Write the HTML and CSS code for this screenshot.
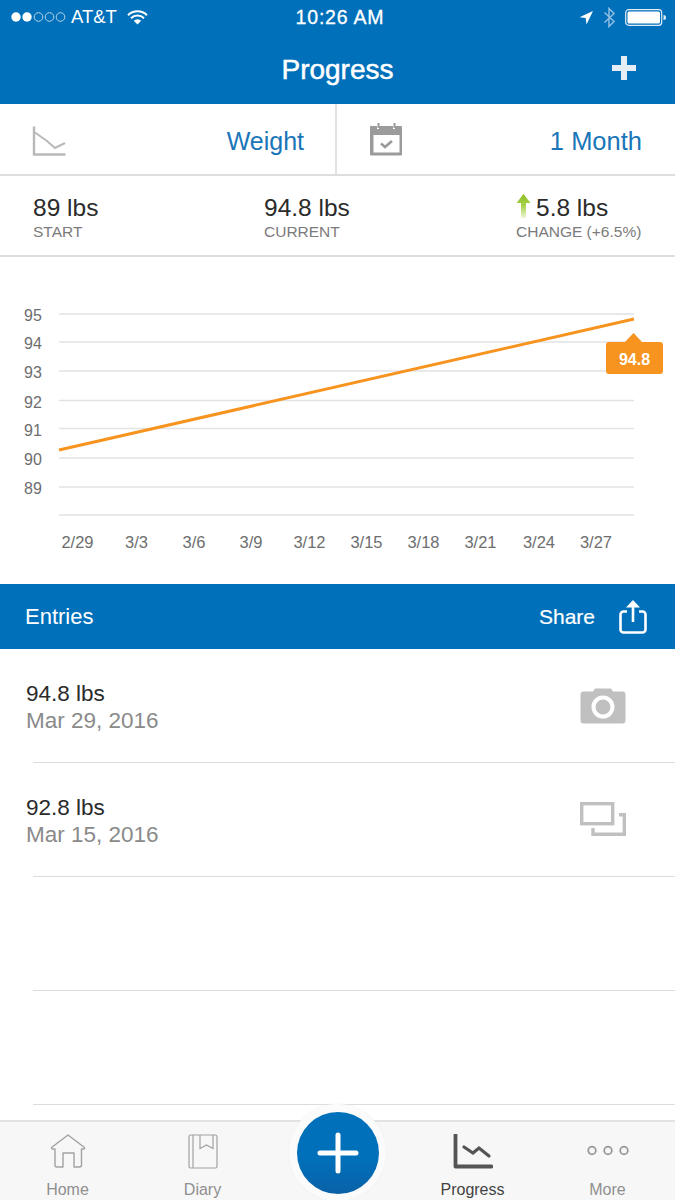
FILE: index.html
```html
<!DOCTYPE html>
<html lang="en">
<head>
<meta charset="utf-8">
<title>Progress</title>
<link rel="stylesheet" href="styles.css">
</head>
<body>
<div class="app">
  <header class="header">
    <div class="status">
      <div class="status-side">
        <svg class="signal" width="56" height="12" viewBox="0 0 56 12"><circle cx="5" cy="6" r="4.700" fill="#fff"/><circle cx="16" cy="6" r="4.700" fill="#fff"/><g fill="none" stroke="#b9d5ea" stroke-width="1"><circle cx="27.500" cy="6" r="4.300"/><circle cx="38.500" cy="6" r="4.300"/><circle cx="49.500" cy="6" r="4.300"/></g></svg>
        <span class="carrier">AT&amp;T</span>
        <svg class="wifi" width="21" height="15" viewBox="0 0 21 15"><path d="M1 5.200a13.500 13.500 0 0 1 19 0M4 8.300a9.200 9.200 0 0 1 13 0" fill="none" stroke="#fff" stroke-width="2"/><path d="M10.500 14.500 6.800 10.700a5.300 5.300 0 0 1 7.400 0z" fill="#fff"/></svg>
      </div>
      <span class="time">10:26 AM</span>
      <div class="status-side status-right">
        <svg width="15" height="15" viewBox="0 0 15 15"><path d="M14 1 7.500 14.500 6.700 8 0.500 7.200z" fill="#fff"/></svg>
        <svg width="13" height="21" viewBox="0 0 13 21"><path d="M1.500 5.500 11 14.500 6 19.500V1.500L11 6.500 1.500 15.500" fill="none" stroke="#8fbde0" stroke-width="1.500"/></svg>
        <svg width="42" height="17" viewBox="0 0 42 17"><rect x=".7" y=".7" width="36" height="15.600" rx="3" fill="none" stroke="#dfecf6" stroke-width="1.200"/><rect x="2.500" y="2.500" width="32.500" height="12" rx="1.500" fill="#fff"/><path d="M38.500 6a2.500 2.500 0 0 1 0 5z" fill="#dfecf6"/></svg>
      </div>
    </div>
    <div class="titlebar">
      <h1 class="title">Progress</h1>
      <svg class="add" width="24" height="24" viewBox="0 0 24 24"><path d="M9 0h6v9h9v6h-9v9H9v-9H0V9h9z" fill="#e3edf5"/></svg>
    </div>
  </header>

  <section class="selectors">
    <div class="selector selector-metric">
      <svg width="34" height="33" viewBox="0 0 34 33"><path d="M2 3.500V31.500H33.500" fill="none" stroke="#b9b9b9" stroke-width="2.400"/><path d="M3 9.500 15 18 23 25 33 20" fill="none" stroke="#b9b9b9" stroke-width="2"/></svg>
      <span class="selector-value">Weight</span>
    </div>
    <div class="selector selector-range">
      <svg width="33" height="33" viewBox="0 0 33 33"><path d="M2 3h5v3h2V3h14v3h2V3h6a1.500 1.500 0 0 1 1 1v27.500a1 1 0 0 1-1 1H1a1 1 0 0 1-1-1V4a1.500 1.500 0 0 1 2-1zM3.500 12v17.500h26V12z" fill="#9b9b9b" fill-rule="evenodd"/><path d="M7.500 0h2v5h-2zM23.500 0h2v5h-2z" fill="#9b9b9b"/><path d="M11 20.500l4 3.500 7-6" fill="none" stroke="#9b9b9b" stroke-width="2.600"/></svg>
      <span class="selector-value">1 Month</span>
    </div>
  </section>

  <section class="stats">
    <div class="stat stat-start"><div class="stat-value">89 lbs</div><div class="stat-label">START</div></div>
    <div class="stat stat-current"><div class="stat-value">94.8 lbs</div><div class="stat-label">CURRENT</div></div>
    <div class="stat stat-change">
      <div class="stat-value change-value">
        <svg width="15" height="24" viewBox="0 0 15 24"><defs><linearGradient id="up" x1="0" y1="0" x2="0" y2="1"><stop offset="0" stop-color="#8cbc1f"/><stop offset=".5" stop-color="#a9d34f"/><stop offset="1" stop-color="#eef6d8"/></linearGradient></defs><path d="M7.500 0 14.500 9H10V24H5V9H.5z" fill="url(#up)"/></svg>
        <span>5.8 lbs</span>
      </div>
      <div class="stat-label">CHANGE (+6.5%)</div>
    </div>
  </section>

  <section class="chart">
    <svg class="chart-svg" width="675" height="327" viewBox="0 257 675 327">
      <g stroke="#e2e2e4" stroke-width="1.500">
        <line x1="59" x2="634" y1="314" y2="314"/>
        <line x1="59" x2="634" y1="342" y2="342"/>
        <line x1="59" x2="634" y1="371" y2="371"/>
        <line x1="59" x2="634" y1="400.500" y2="400.500"/>
        <line x1="59" x2="634" y1="428.500" y2="428.500"/>
        <line x1="59" x2="634" y1="458" y2="458"/>
        <line x1="59" x2="634" y1="487" y2="487"/>
        <line x1="59" x2="634" y1="515" y2="515"/>
      </g>
      <g class="axis">
        <text x="24" y="321">95</text>
        <text x="24" y="349">94</text>
        <text x="24" y="378">93</text>
        <text x="24" y="408">92</text>
        <text x="24" y="435.500">91</text>
        <text x="24" y="465">90</text>
        <text x="24" y="494">89</text>
      </g>
      <g class="axis axis-x">
        <text x="77.500" y="548">2/29</text>
        <text x="136.500" y="548">3/3</text>
        <text x="194" y="548">3/6</text>
        <text x="251" y="548">3/9</text>
        <text x="309.500" y="548">3/12</text>
        <text x="366.500" y="548">3/15</text>
        <text x="423.500" y="548">3/18</text>
        <text x="480.500" y="548">3/21</text>
        <text x="539" y="548">3/24</text>
        <text x="596" y="548">3/27</text>
      </g>
      <line x1="59" y1="450" x2="634" y2="319" stroke="#f7941f" stroke-width="3"/>
      <path d="M606 345a3 3 0 0 1 3-3H625L633.500 333 642 342H660a3 3 0 0 1 3 3V371a3 3 0 0 1-3 3H609a3 3 0 0 1-3-3z" fill="#f7941f"/>
      <text class="tip" x="634.500" y="364.500">94.8</text>
    </svg>
  </section>

  <section class="entries-bar">
    <span class="entries-title">Entries</span>
    <div class="share">
      <span>Share</span>
      <svg width="28" height="34" viewBox="0 0 28 34"><path d="M8 11.500H4.500a3 3 0 0 0-3 3V29.500a3 3 0 0 0 3 3h19a3 3 0 0 0 3-3V14.500a3 3 0 0 0-3-3H20" fill="none" stroke="#fff" stroke-width="2.600"/><path d="M14 3V22" stroke="#fff" stroke-width="2.600"/><path d="M14 0 21 7.500H7z" fill="#fff"/></svg>
    </div>
  </section>

  <main class="entries">
    <article class="entry">
      <div><div class="entry-value">94.8 lbs</div><div class="entry-date">Mar 29, 2016</div></div>
      <svg class="entry-icon" width="46" height="36" viewBox="0 0 46 36"><path d="M3.500 3.500H13L15 .5H31L33 3.500H42.500a3 3 0 0 1 3 3V32.500a3 3 0 0 1-3 3H3.500a3 3 0 0 1-3-3V6.500a3 3 0 0 1 3-3z" fill="#c0c0c0"/><circle cx="23" cy="19" r="9.500" fill="none" stroke="#fff" stroke-width="4"/></svg>
    </article>
    <article class="entry">
      <div><div class="entry-value">92.8 lbs</div><div class="entry-date">Mar 15, 2016</div></div>
      <svg class="entry-icon" width="46" height="35" viewBox="0 0 46 35"><rect x="1.700" y="1.700" width="31" height="20" fill="none" stroke="#c0c0c0" stroke-width="3.400"/><path d="M39 12.700H44.300V32.300H13V26" fill="none" stroke="#c0c0c0" stroke-width="3.400"/></svg>
    </article>
    <article class="entry"></article>
    <article class="entry"></article>
  </main>

  <nav class="tabs">
    <div class="tab">
      <svg width="36" height="35" viewBox="0 0 36 35"><path d="M18 1 34.500 13.500Q35 15 33.500 15H31.500V31a2 2 0 0 1-2 2H24V19H13V33H7a2 2 0 0 1-2-2V15H3Q1 15 1.500 13.500Z" fill="none" stroke="#a2a2a2" stroke-width="1.400" stroke-linejoin="round"/></svg>
      <span>Home</span>
    </div>
    <div class="tab">
      <svg width="30" height="35" viewBox="0 0 30 35"><rect x="1" y="1" width="28" height="33" rx="1.500" fill="none" stroke="#a2a2a2" stroke-width="1.200"/><path d="M5 1V34M12 1V14.500L18.500 11 25 14.500V1" fill="none" stroke="#a2a2a2" stroke-width="1.200"/></svg>
      <span>Diary</span>
    </div>
    <div class="tab-spacer"></div>
    <div class="tab tab-active">
      <svg width="40" height="35" viewBox="0 0 40 35"><path d="M2.500 0V32.500H38.500" fill="none" stroke="#555" stroke-width="3.800" stroke-linecap="round" stroke-linejoin="round"/><path d="M11 13 20 19 26 14 36 22" fill="none" stroke="#555" stroke-width="3.200" stroke-linecap="round"/></svg>
      <span>Progress</span>
    </div>
    <div class="tab">
      <svg width="44" height="35" viewBox="0 0 44 35"><g fill="none" stroke="#999" stroke-width="1.800"><circle cx="6" cy="16.500" r="3.800"/><circle cx="22" cy="16.500" r="3.800"/><circle cx="38" cy="16.500" r="3.800"/></g></svg>
      <span>More</span>
    </div>
  </nav>

  <div class="fab">
    <svg width="42" height="42" viewBox="0 0 42 42"><path d="M21 3V39M3 21H39" stroke="#fff" stroke-width="5" stroke-linecap="round"/></svg>
  </div>
</div>
</body>
</html>
```

FILE: styles.css
```css
* { box-sizing: border-box; }
html, body { margin: 0; padding: 0; }
body { font-family: "Liberation Sans", Arial, sans-serif; background: #fff; color: #2b2b2b; }
.app { position: relative; width: 675px; height: 1200px; display: flex; flex-direction: column; overflow: hidden; }

.header { height: 104px; background: #0070ba; color: #fff; flex: none; }
.status { height: 34px; display: flex; align-items: center; justify-content: space-between; padding: 0 8px 0 11px; position: relative; }
.status-side { display: flex; align-items: center; width: 200px; }
.signal { margin-right: 4px; }
.carrier { font-size: 18.500px; margin-right: 10px; }
.time { font-size: 19.500px; letter-spacing: .8px; -webkit-text-stroke: .3px #fff; }
.status-right { justify-content: flex-end; gap: 9px; width: 198px; }
.titlebar { height: 70px; display: flex; align-items: center; justify-content: center; position: relative; padding-top: 2px; }
.title { margin: 0; font-size: 28px; font-weight: 400; -webkit-text-stroke: .5px #fff; }
.add { position: absolute; right: 39px; top: 22px; }

.selectors { height: 72px; display: flex; flex: none; border-bottom: 2px solid #dedede; }
.selector { display: flex; align-items: center; justify-content: space-between; }
.selector-metric { width: 337px; padding: 0 32px 0 32px; border-right: 2px solid #e2e2e2; }
.selector-range { flex: 1; padding: 0 33px 0 33px; }
.selector-value { color: #1a76b8; font-size: 25.500px; margin-top: 5px; }
.selector-metric .selector-value { font-size: 25px; margin-right: -1px; }

.stats { height: 81px; display: flex; flex: none; border-bottom: 2px solid #dedede; padding-top: 18px; position: relative; }
.stat-start { width: 264px; padding-left: 33px; }
.stat-current { width: 252px; }
.stat-value { font-size: 24.500px; line-height: 28px; color: #2b2b2b; }
.stat-label { font-size: 15.500px; line-height: 20px; color: #7b7b7b; }
.change-value { display: flex; align-items: center; gap: 5px; margin-top: 0; }
.change-value svg { margin-top: -5px; }

.chart { height: 327px; flex: none; }
.chart-svg { display: block; }
.axis text { font-size: 16px; fill: #6e6e6e; font-family: "Liberation Sans", Arial, sans-serif; }
.axis-x text { font-size: 16.500px; text-anchor: middle; }
.tip { font-size: 16px; font-weight: 700; fill: #fff; text-anchor: middle; font-family: "Liberation Sans", Arial, sans-serif; }

.entries-bar { height: 65px; flex: none; background: #0070ba; color: #fff; display: flex; align-items: center; justify-content: space-between; padding: 0 28px 0 25px; }
.entries-title { font-size: 22px; }
.share { display: flex; align-items: center; gap: 24px; font-size: 21px; -webkit-text-stroke: .2px #fff; }

.entries { flex: 1; overflow: hidden; }
.entry { height: 114px; margin-left: 33px; border-bottom: 1px solid #dcdcdc; display: flex; align-items: center; justify-content: space-between; padding-right: 49px; }
.entry > div { margin-left: -7px; margin-top: 2px; }
.entry-value { font-size: 22.500px; line-height: 28px; color: #2b2b2b; }
.entry-date { font-size: 22.500px; line-height: 26px; color: #8a8a8a; }

.tabs { height: 80px; flex: none; background: #f7f7f7; border-top: 2px solid #e2e2e2; display: flex; align-items: flex-start; }
.tab { display: flex; flex-direction: column; align-items: center; width: 135px; padding-top: 12px; font-size: 16px; color: #8f8f8f; }
.tab span { margin-top: 11px; line-height: 20px; }
.tab-spacer { width: 135px; }
.tab-active { color: #444; }

.fab { position: absolute; left: 289px; top: 1104px; width: 97px; height: 97px; border-radius: 50%; background: #fbfbfb; box-shadow: 0 0 2px #ececec; }
.fab::before { content: ""; position: absolute; left: 7.500px; top: 7.500px; width: 82px; height: 82px; border-radius: 50%; background: linear-gradient(#0070ba 55%, #0a62a8); }
.fab svg { position: absolute; left: 27.500px; top: 27.500px; }
```
